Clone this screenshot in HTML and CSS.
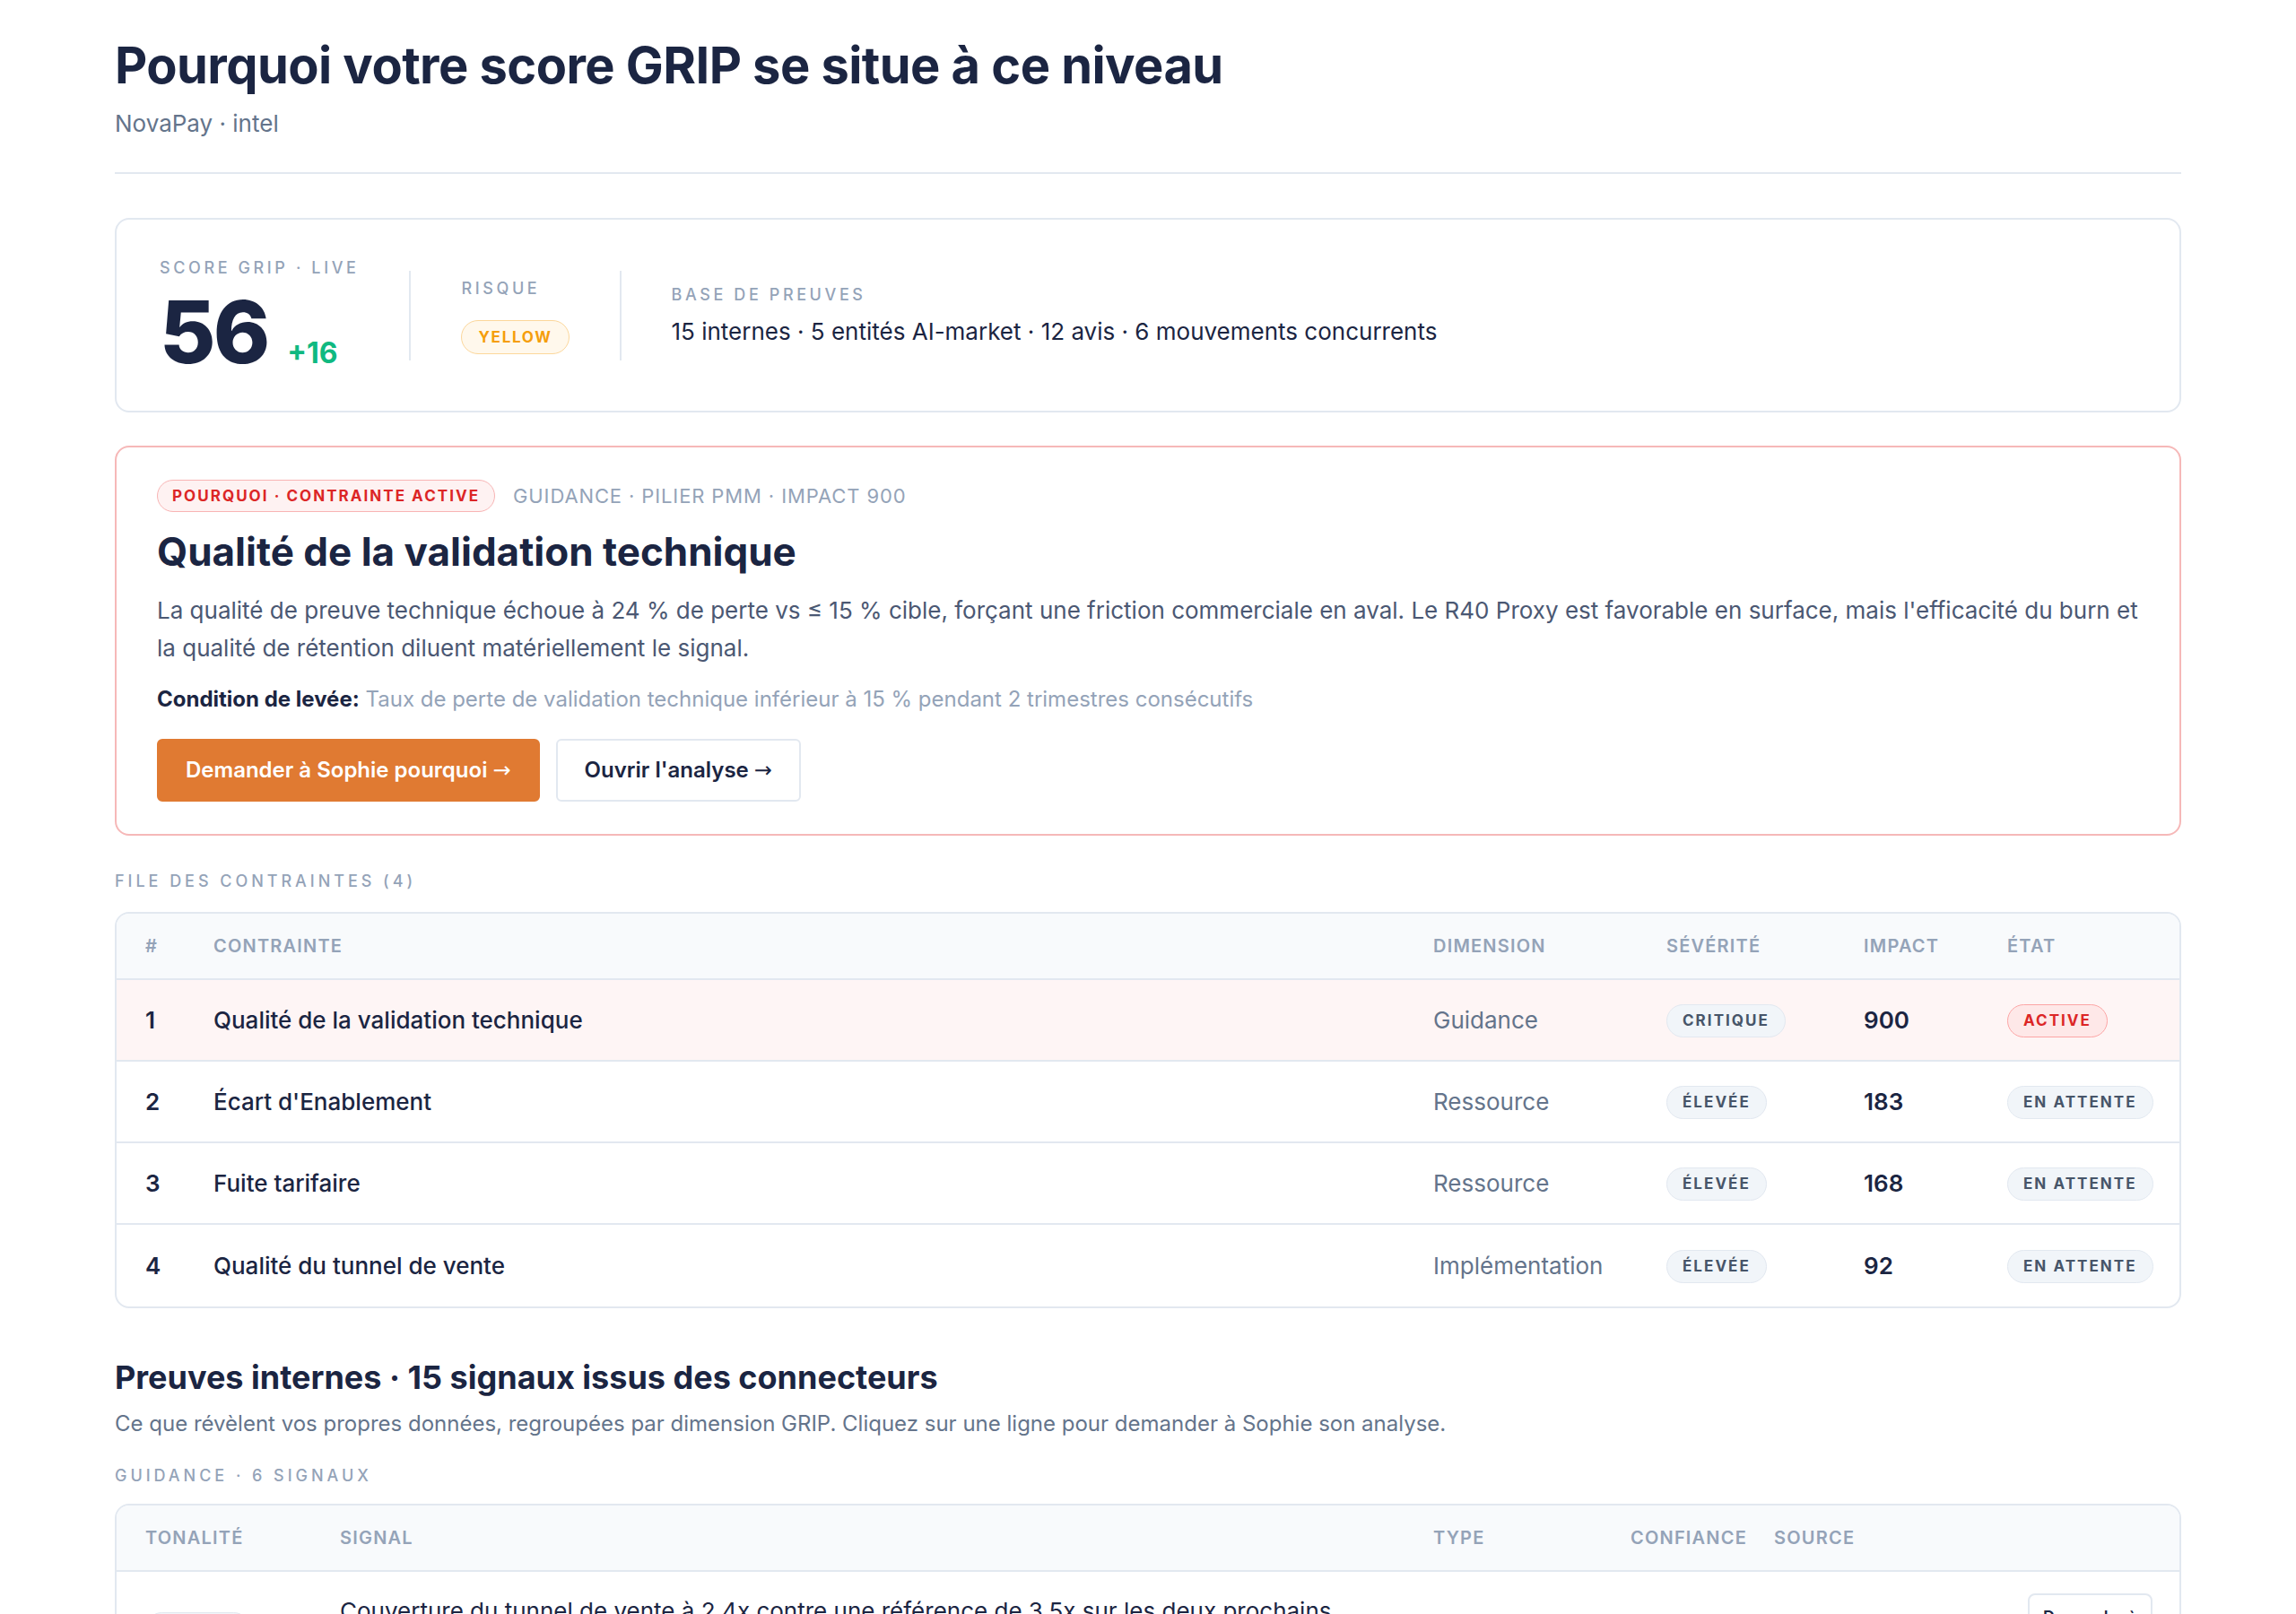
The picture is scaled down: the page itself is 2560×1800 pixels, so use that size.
FILE: index.html
```html
<!DOCTYPE html>
<html lang="fr">
<head>
<meta charset="utf-8">
<title>Pourquoi votre score GRIP se situe à ce niveau</title>
<link rel="stylesheet" href="styles.css">
</head>
<body>
<main class="page">
  <header class="page-head">
    <h1 class="page-title">Pourquoi votre score GRIP se situe à ce niveau</h1>
    <p class="page-sub">NovaPay · intel</p>
  </header>

  <!-- Score summary -->
  <section class="card score-card">
    <div class="score-block">
      <div class="eyebrow">Score GRIP · Live</div>
      <div class="score-line">
        <span class="score-value">56</span>
        <span class="score-delta">+16</span>
      </div>
    </div>
    <div class="vsep"></div>
    <div class="risk-block">
      <div class="eyebrow">Risque</div>
      <span class="pill pill-yellow">Yellow</span>
    </div>
    <div class="vsep"></div>
    <div class="evidence-block">
      <div class="eyebrow">Base de preuves</div>
      <div class="evidence-text">15 internes · 5 entités AI-market · 12 avis · 6 mouvements concurrents</div>
    </div>
  </section>

  <!-- Active constraint -->
  <section class="card why-card">
    <div class="why-meta">
      <span class="pill pill-red">Pourquoi · Contrainte active</span>
      <span class="why-tags">GUIDANCE · PILIER PMM · IMPACT 900</span>
    </div>
    <h2 class="why-title">Qualité de la validation technique</h2>
    <p class="why-body">La qualité de preuve technique échoue à 24 % de perte vs ≤ 15 % cible, forçant une friction commerciale en aval. Le R40 Proxy est favorable en surface, mais l'efficacité du burn et la qualité de rétention diluent matériellement le signal.</p>
    <p class="why-cond"><strong>Condition de levée:</strong> <span>Taux de perte de validation technique inférieur à 15 % pendant 2 trimestres consécutifs</span></p>
    <div class="why-actions">
      <button class="btn btn-primary" type="button">Demander à Sophie pourquoi <span class="arrow">→</span></button>
      <button class="btn btn-ghost" type="button">Ouvrir l'analyse <span class="arrow">→</span></button>
    </div>
  </section>

  <!-- Constraint queue -->
  <div class="eyebrow section-label">File des contraintes (4)</div>
  <div class="table-card">
    <div class="trow queue-row thead">
      <div>#</div>
      <div>Contrainte</div>
      <div>Dimension</div>
      <div>Sévérité</div>
      <div>Impact</div>
      <div>État</div>
    </div>
    <div class="trow queue-row tbody is-active">
      <div class="num">1</div>
      <div class="name">Qualité de la validation technique</div>
      <div class="dim">Guidance</div>
      <div><span class="pill pill-gray">Critique</span></div>
      <div class="num">900</div>
      <div><span class="pill pill-red-soft">Active</span></div>
    </div>
    <div class="trow queue-row tbody">
      <div class="num">2</div>
      <div class="name">Écart d'Enablement</div>
      <div class="dim">Ressource</div>
      <div><span class="pill pill-gray">Élevée</span></div>
      <div class="num">183</div>
      <div><span class="pill pill-gray">En attente</span></div>
    </div>
    <div class="trow queue-row tbody">
      <div class="num">3</div>
      <div class="name">Fuite tarifaire</div>
      <div class="dim">Ressource</div>
      <div><span class="pill pill-gray">Élevée</span></div>
      <div class="num">168</div>
      <div><span class="pill pill-gray">En attente</span></div>
    </div>
    <div class="trow queue-row tbody">
      <div class="num">4</div>
      <div class="name">Qualité du tunnel de vente</div>
      <div class="dim">Implémentation</div>
      <div><span class="pill pill-gray">Élevée</span></div>
      <div class="num">92</div>
      <div><span class="pill pill-gray">En attente</span></div>
    </div>
  </div>

  <!-- Internal evidence -->
  <h2 class="section-title">Preuves internes · 15 signaux issus des connecteurs</h2>
  <p class="section-sub">Ce que révèlent vos propres données, regroupées par dimension GRIP. Cliquez sur une ligne pour demander à Sophie son analyse.</p>
  <div class="eyebrow group-label">Guidance · 6 signaux</div>
  <div class="table-card signal-card">
    <div class="trow signal-row thead">
      <div>Tonalité</div>
      <div>Signal</div>
      <div>Type</div>
      <div>Confiance</div>
      <div>Source</div>
      <div></div>
    </div>
    <div class="trow signal-row tbody">
      <div><span class="pill pill-gray">Neutre</span></div>
      <div class="signal-text">Couverture du tunnel de vente à 2,4x contre une référence de 3,5x sur les deux prochains trimestres, ce qui fragilise la guidance.</div>
      <div class="dim">Pipeline</div>
      <div class="dim">Haute</div>
      <div class="dim">HubSpot</div>
      <div><button class="btn-ask" type="button">Demander à Sophie</button></div>
    </div>
  </div>
</main>
</body>
</html>
```

FILE: styles.css
```css
* { box-sizing: border-box; }

html { scrollbar-width: none; }

body {
  margin: 0;
  background: #ffffff;
  font-family: Inter, "Noto Sans", "Liberation Sans", sans-serif;
  color: #1b2542;
}

.page {
  padding: 40px 128px 80px;
}

/* Page header */
.page-head {
  padding-bottom: 35px;
  border-bottom: 2px solid #e2e8f0;
}

.page-title {
  margin: 0;
  font-size: 56px;
  line-height: 1.2;
  font-weight: 700;
  letter-spacing: -0.01em;
  color: #1b2542;
}

.page-sub {
  margin: 11px 0 0;
  font-size: 26px;
  line-height: 1.5;
  color: #64748b;
}

/* Shared */
.card {
  border: 2px solid #e2e8f0;
  border-radius: 16px;
  background: #ffffff;
}

.eyebrow {
  font-size: 18px;
  line-height: 27px;
  font-weight: 500;
  letter-spacing: 0.2em;
  text-transform: uppercase;
  color: #94a3b8;
}

.pill {
  display: inline-block;
  border-radius: 999px;
  border: 1.5px solid #e2e8f0;
  background: #f1f5f9;
  color: #475569;
  font-size: 17px;
  line-height: 20px;
  font-weight: 700;
  letter-spacing: 0.12em;
  text-transform: uppercase;
  padding: 7.5px 17px;
  white-space: nowrap;
}

.pill-yellow {
  color: #f59e0b;
  background: #fff8ec;
  border-color: #fcd79b;
  letter-spacing: 0.1em;
  padding: 8px 18px;
}

.pill-red {
  color: #dc2626;
  background: #fef2f2;
  border-color: #f8b4b4;
  letter-spacing: 0.12em;
  padding: 7px 16px;
}

.pill-red-soft {
  color: #dc2626;
  background: #fee8e8;
  border-color: #fca5a5;
}

.arrow {
  font-family: "DejaVu Sans", sans-serif;
  font-weight: 400;
}

/* Score summary */
.score-card {
  margin-top: 49px;
  display: flex;
  align-items: center;
  gap: 56px;
  padding: 40px 48px;
}

.vsep {
  width: 2px;
  height: 100px;
  background: #e2e8f0;
}

.score-line {
  display: flex;
  align-items: baseline;
  gap: 22px;
  margin-top: 10px;
}

.score-value {
  font-size: 96px;
  line-height: 1;
  font-weight: 800;
  letter-spacing: -0.03em;
  color: #1b2542;
}

.score-delta {
  font-size: 32px;
  font-weight: 700;
  color: #10b981;
}

.risk-block .eyebrow {
  margin-bottom: 22px;
}

.evidence-text {
  margin-top: 8px;
  font-size: 26px;
  line-height: 39px;
  color: #1b2542;
}

/* Active constraint card */
.why-card {
  margin-top: 37px;
  border-color: #f6b8b8;
  padding: 36px 45px;
}

.why-meta {
  display: flex;
  align-items: center;
  gap: 20px;
}

.why-tags {
  font-size: 22px;
  line-height: 30px;
  letter-spacing: 0.04em;
  color: #94a3b8;
}

.why-title {
  margin: 18px 0 0;
  font-size: 44px;
  line-height: 52px;
  font-weight: 700;
  letter-spacing: 0;
  color: #1b2542;
}

.why-body {
  margin: 19px 0 0;
  font-size: 26px;
  line-height: 1.6;
  color: #4b5873;
}

.why-cond {
  margin: 19px 0 0;
  font-size: 24px;
  line-height: 36px;
  color: #94a3b8;
}

.why-cond strong {
  font-weight: 700;
  color: #1b2542;
}

.why-actions {
  display: flex;
  gap: 18px;
  margin-top: 26px;
}

.btn {
  font-family: inherit;
  font-size: 24px;
  line-height: 30px;
  font-weight: 600;
  padding: 18px 30px;
  border-radius: 6px;
  border: 2px solid #e2e8f0;
  background: #ffffff;
  color: #1b2542;
  cursor: pointer;
}

.btn-primary {
  background: #e07a32;
  border-color: #e07a32;
  color: #ffffff;
}

/* Tables */
.section-label {
  margin-top: 37px;
  letter-spacing: 0.22em;
}

.table-card {
  margin-top: 21px;
  border: 2px solid #e2e8f0;
  border-radius: 16px;
  overflow: hidden;
  background: #ffffff;
}

.signal-card {
  margin-top: 18px;
}

.trow {
  display: grid;
  align-items: center;
  padding: 0 30px 0 32px;
}

.queue-row {
  grid-template-columns: 76px 1fr 260px 220px 160px 162px;
}

.signal-row {
  grid-template-columns: 217px 1fr 220px 160px 283px 139px;
}

.thead {
  height: 74px;
  background: #f8fafc;
  border-bottom: 2px solid #e2e8f0;
  font-size: 20px;
  font-weight: 600;
  letter-spacing: 0.06em;
  text-transform: uppercase;
  color: #94a3b8;
}

.tbody {
  height: 91px;
  border-bottom: 2px solid #e2e8f0;
  font-size: 26px;
  color: #1b2542;
}

.tbody:last-child {
  border-bottom: none;
}

.tbody.is-active {
  background: #fef5f5;
}

.tbody .num {
  font-weight: 600;
}

.tbody .name {
  font-weight: 500;
}

.tbody .dim {
  color: #64748b;
}

/* Internal evidence */
.section-title {
  margin: 55px 0 0;
  font-size: 36px;
  line-height: 44px;
  font-weight: 700;
  letter-spacing: 0;
  color: #1b2542;
}

.section-sub {
  margin: 12px 0 0;
  font-size: 24px;
  line-height: 36px;
  color: #64748b;
}

.group-label {
  margin-top: 26px;
  letter-spacing: 0.22em;
}

.signal-row.tbody {
  height: auto;
  padding-top: 24px;
  padding-bottom: 24px;
}

.signal-text {
  padding-right: 40px;
  line-height: 1.5;
}

.btn-ask {
  width: 139px;
  font-family: inherit;
  font-size: 18px;
  line-height: 24px;
  font-weight: 600;
  color: #1b2542;
  background: #ffffff;
  border: 2px solid #e2e8f0;
  border-radius: 8px;
  padding: 13px 12px;
  cursor: pointer;
}
```
